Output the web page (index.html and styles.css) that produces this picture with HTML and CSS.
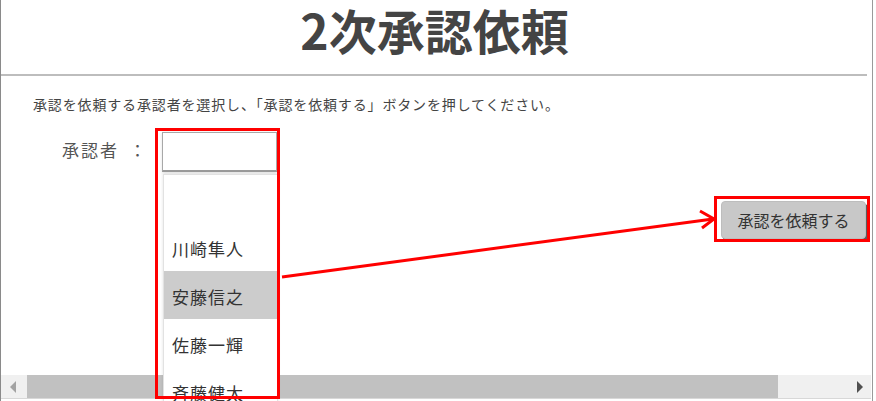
FILE: index.html
```html
<!DOCTYPE html>
<html lang="ja">
<head>
  <meta charset="UTF-8">
  <title>2次承認依頼</title>
  <link rel="stylesheet" href="styles.css">
</head>
<body>
  <div class="page">
    <div class="title-bar">
      <h1>2次承認依頼</h1>
    </div>

    <div class="content">
      <p class="lead">承認を依頼する承認者を選択し、「承認を依頼する」ボタンを押してください。</p>

      <div class="field">
        <span class="field-label">承認者<span class="colon">：</span></span>
        <div class="select-wrap">
          <div class="select"></div>
          <ul class="options">
            <li></li>
            <li>川崎隼人</li>
            <li class="hover">安藤信之</li>
            <li>佐藤一輝</li>
            <li>斉藤健太</li>
          </ul>
        </div>
      </div>

      <div class="actions">
        <button class="btn">承認を依頼する</button>
      </div>
    </div>

    <div class="hscroll">
      <span class="hs-btn"><span class="tri tri-left"></span></span>
      <div class="hs-track"><div class="hs-thumb"></div></div>
      <span class="hs-btn"><span class="tri tri-right"></span></span>
    </div>

    <!-- annotations drawn on top of the screen -->
    <div class="edge-accent"></div>
    <div class="mark mark-select"></div>
    <div class="mark mark-button"></div>
    <svg class="arrow" width="876" height="401" viewBox="0 0 876 401">
      <line x1="282" y1="277" x2="713" y2="219" stroke="#ff0000" stroke-width="3"/>
      <polyline points="700,211 714,219 702,228" fill="none" stroke="#ff0000" stroke-width="3" stroke-linejoin="miter"/>
    </svg>
  </div>
</body>
</html>
```

FILE: styles.css
```css
body {
  margin: 0;
  background: #fff;
  font-family: "Noto Sans CJK JP", "Noto Sans", sans-serif;
  color: #444;
}
.page {
  position: relative;
  width: 873px;
  height: 401px;
  border-left: 1px solid #8a8a8a;
  border-right: 1px solid #9a9a9a;
  display: flex;
  flex-direction: column;
  overflow: hidden;
  box-sizing: border-box;
}
.title-bar {
  height: 74px;
  margin-right: 5px;
  border-bottom: 2px solid #bdbdbd;
  display: flex;
  justify-content: center;
  align-items: flex-start;
}
.title-bar h1 {
  margin: 0;
  padding: 1px 0 0 1px;
  font-size: 48px;
  line-height: 56px;
  font-weight: bold;
  color: #444;
}
.content {
  flex: 1;
}
.lead {
  margin: 18px 0 0 32px;
  font-size: 14px;
  line-height: 20px;
  color: #444;
  letter-spacing: 0.85px;
}
.field {
  display: flex;
  align-items: flex-start;
  margin-top: 18px;
}
.field-label {
  width: 161px;
  padding-left: 61px;
  padding-top: 7px;
  font-size: 17px;
  line-height: 22px;
  color: #555;
  letter-spacing: 2px;
  box-sizing: border-box;
  white-space: nowrap;
}
.colon {
  margin-left: 10px;
  letter-spacing: 0;
}
.select-wrap {
  position: relative;
}
.select {
  width: 113px;
  height: 37px;
  border: 1px solid #a8a8a8;
  border-bottom: 2px solid #9a9a9a;
  box-shadow: 0 1px 3px rgba(0, 0, 0, 0.12);
  background: #fff;
}
.options {
  position: absolute;
  top: 42px;
  left: 1px;
  z-index: 2;
  width: 113px;
  margin: 0;
  padding: 0;
  list-style: none;
  background: #fff;
  border: 1px solid #e2e2e2;
  box-shadow: 0 0 3px rgba(0, 0, 0, 0.12);
}
.options li {
  height: 48px;
  padding-left: 8px;
  padding-top: 2px;
  font-size: 17px;
  line-height: 48px;
  letter-spacing: 1px;
  color: #333;
  box-sizing: border-box;
  white-space: nowrap;
}
.options li.hover {
  background: #cccccc;
}
.actions {
  display: flex;
  justify-content: flex-end;
  padding-right: 6px;
}
.btn {
  width: 145px;
  height: 38px;
  margin-top: 29px;
  padding: 0;
  background: #c8c8c8;
  border: 1px solid #bdbdbd;
  border-radius: 4px;
  box-shadow: 2px 3px 0 #5c5c5c;
  font-family: "Noto Sans CJK JP", "Noto Sans", sans-serif;
  font-size: 16px;
  color: #333;
}
.hscroll {
  display: flex;
  height: 23px;
  margin-right: 1px;
  margin-bottom: 2px;
  background: #f0f0f0;
  border-bottom: 1px solid #d8d8d8;
}
.hs-btn {
  width: 26px;
  display: flex;
  align-items: center;
  justify-content: center;
}
.hs-track {
  flex: 1;
}
.hs-thumb {
  width: 751px;
  height: 100%;
  background: #c1c1c1;
}
.tri {
  width: 0;
  height: 0;
  border-top: 6px solid transparent;
  border-bottom: 6px solid transparent;
}
.tri-left {
  border-right: 6px solid #a3a3a3;
  margin-left: -2px;
}
.tri-right {
  border-left: 6px solid #505050;
  margin-left: 4px;
}
.edge-accent {
  position: absolute;
  left: -1px;
  top: 210px;
  width: 1px;
  height: 113px;
  background: #3b6c78;
}
.mark {
  position: absolute;
  border: 3px solid #ff0000;
  box-sizing: border-box;
  z-index: 3;
}
.mark-select {
  left: 154px;
  top: 128px;
  width: 125px;
  height: 271px;
}
.mark-button {
  left: 713px;
  top: 196px;
  width: 156px;
  height: 46px;
}
.arrow {
  position: absolute;
  left: -1px;
  top: 0;
  z-index: 3;
  pointer-events: none;
}
```
